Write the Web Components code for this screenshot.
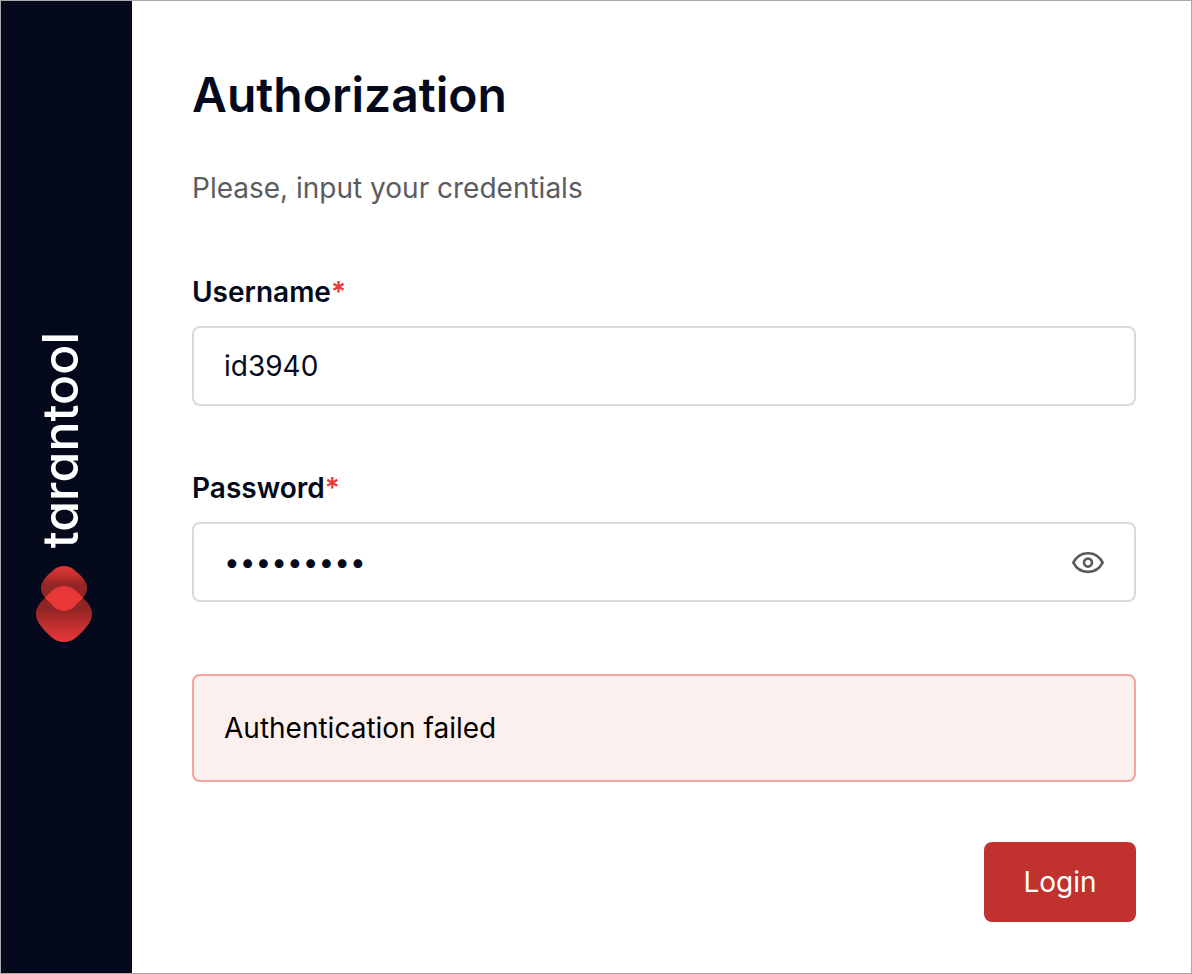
<!DOCTYPE html>
<html lang="en">
<head>
<meta charset="utf-8">
<meta name="viewport" content="width=device-width, initial-scale=1">
<title>Authorization</title>
<style>
  * { box-sizing: border-box; }
  body {
    --ink: #040a1b;
    --line: #d9d9d9;
    --accent: #e93735;
    margin: 0;
    color: var(--ink);
    background: #fff;
    font: 400 28px/40px Inter, "Liberation Sans", sans-serif;
  }
</style>
</head>
<body>
<auth-page>
  <brand-bar slot="side">tarantool</brand-bar>
  <login-form></login-form>
</auth-page>

<script>
class AuthPage extends HTMLElement {
  constructor() {
    super()
    this.attachShadow({mode: 'open'}).innerHTML = `
      <style>
        :host {
          display: flex;
          box-sizing: border-box;
          min-height: 100vh;
          border: 1px solid #a9a9a9;
        }
        main {
          flex: 1;
          min-width: 0;
          padding: 66px 55px 48px 60px;
        }
      </style>
      <slot name="side"></slot>
      <main><slot></slot></main>
    `
  }
}

class BrandBar extends HTMLElement {
  constructor() {
    super()
    this.attachShadow({mode: 'open'}).innerHTML = `
      <style>
        :host {
          display: flex;
          flex-direction: column;
          align-items: center;
          justify-content: center;
          gap: 18px;
          box-sizing: border-box;
          width: 131px;
          padding-right: 5px;
          background: var(--ink);
          color: #fff;
        }
        .name {
          writing-mode: vertical-rl;
          transform: rotate(180deg);
          margin-right: 8px;
          font-size: 50px;
          line-height: 56px;
          font-weight: 500;
          font-feature-settings: "cv11";
        }
        svg { display: block; }
      </style>
      <span class="name"><slot></slot></span>
      <svg width="56" height="76" viewBox="0 0 56 76" aria-hidden="true">
        <defs>
          <linearGradient id="top" x1="0" y1="0" x2="0" y2="1">
            <stop offset="0" stop-color="#df3534"/>
            <stop offset=".2" stop-color="#c43030"/>
            <stop offset=".42" stop-color="#962626"/>
            <stop offset="1" stop-color="#8e2424"/>
          </linearGradient>
          <linearGradient id="bottom" x1="0" y1="0" x2="0" y2="1">
            <stop offset=".38" stop-color="#8e2424"/>
            <stop offset=".6" stop-color="#b02c2c"/>
            <stop offset=".8" stop-color="#cd3232"/>
            <stop offset="1" stop-color="#e93737"/>
          </linearGradient>
          <clipPath id="upper">
            <path d="M28 0C35 0 39 4 45 10C49 14 51 18 51 22C51 28 47 32 41 38C36 43 33 45 28 45C23 45 20 43 15 38C9 32 5 28 5 22C5 18 7 14 11 10C17 4 21 0 28 0Z"/>
          </clipPath>
        </defs>
        <path fill="url(#top)" d="M28 0C35 0 39 4 45 10C49 14 51 18 51 22C51 28 47 32 41 38C36 43 33 45 28 45C23 45 20 43 15 38C9 32 5 28 5 22C5 18 7 14 11 10C17 4 21 0 28 0Z"/>
        <path fill="url(#bottom)" d="M28 20C35 20 41 25 48 33C53 38 56 42 56 48C56 54 53 58 47 65C40 72 36 76 28 76C20 76 16 72 9 65C3 58 0 54 0 48C0 42 3 38 8 33C15 25 21 20 28 20Z"/>
        <path fill="#e93737" clip-path="url(#upper)" d="M28 20C35 20 41 25 48 33C53 38 56 42 56 48C56 54 53 58 47 65C40 72 36 76 28 76C20 76 16 72 9 65C3 58 0 54 0 48C0 42 3 38 8 33C15 25 21 20 28 20Z"/>
      </svg>
    `
  }
}

class FormField extends HTMLElement {
  connectedCallback() {
    if (this.shadowRoot) return
    const type = this.getAttribute('type') || 'text'
    this.attachShadow({mode: 'open'}).innerHTML = `
      <style>
        :host { display: block; }
        label {
          display: block;
          margin-bottom: 14px;
          font-weight: 600;
        }
        .mark { color: var(--accent); }
        .box {
          display: flex;
          align-items: center;
          box-sizing: border-box;
          height: 80px;
          padding: 0 30px;
          border: 2px solid var(--line);
          border-radius: 8px;
          background: #fff;
        }
        .box:focus-within { border-color: #8c8c8c; }
        input {
          flex: 1;
          min-width: 0;
          padding: 0;
          border: 0;
          outline: 0;
          background: none;
          color: inherit;
          font: inherit;
        }
        button {
          display: block;
          padding: 0;
          border: 0;
          background: none;
          color: #5b5c60;
          cursor: pointer;
        }
        svg { display: block; }
      </style>
      <label for="control"><slot></slot><span class="mark">*</span></label>
      <div class="box">
        <input id="control" type="${type}" value="${this.getAttribute('value') || ''}" required>
        ${type === 'password' ? `
        <button type="button" aria-label="Show password">
          <svg width="32" height="32" viewBox="0 0 32 32" fill="none" stroke="currentColor" stroke-width="2.6">
            <path stroke-linejoin="round" d="M1.3 16.6C4.5 10.5 9.8 7.3 16 7.3S27.5 10.5 30.7 16.6C27.5 22.7 22.2 25.9 16 25.9S4.5 22.7 1.3 16.6Z"/>
            <circle cx="16" cy="16.6" r="4"/>
          </svg>
        </button>` : ''}
      </div>
    `
    const toggle = this.shadowRoot.querySelector('button')
    if (toggle) {
      const input = this.shadowRoot.querySelector('input')
      toggle.addEventListener('click', () => {
        input.type = input.type === 'password' ? 'text' : 'password'
      })
    }
  }
}

class AlertBox extends HTMLElement {
  constructor() {
    super()
    this.attachShadow({mode: 'open'}).innerHTML = `
      <style>
        :host {
          display: block;
          padding: 32px 30px;
          border: 2px solid #f4a3a0;
          border-radius: 8px;
          background: #fcf0ee;
          color: #000;
        }
      </style>
      <slot></slot>
    `
  }
}

class LoginForm extends HTMLElement {
  constructor() {
    super()
    this.attachShadow({mode: 'open'}).innerHTML = `
      <style>
        :host { display: block; }
        h1 {
          margin: 0 0 45px;
          font-size: 48px;
          line-height: 56px;
          font-weight: 600;
        }
        p {
          margin: 0 0 64px;
          color: #5b5c60;
        }
        form-field { margin-bottom: 62px; }
        alert-box { margin: 72px 0 60px; }
        .actions {
          display: flex;
          justify-content: flex-end;
        }
        button {
          min-width: 152px;
          padding: 20px 32px;
          border: 0;
          border-radius: 8px;
          background: #c0312f;
          color: #fff;
          font: inherit;
          cursor: pointer;
        }
        button:hover { background: #a92a28; }
      </style>
      <h1>Authorization</h1>
      <p>Please, input your credentials</p>
      <form>
        <form-field value="id3940">Username</form-field>
        <form-field type="password" value="password1">Password</form-field>
        <alert-box role="alert">Authentication failed</alert-box>
        <div class="actions"><button type="submit">Login</button></div>
      </form>
    `
    this.shadowRoot.querySelector('form').addEventListener('submit', e => e.preventDefault())
  }
}

customElements.define('auth-page', AuthPage)
customElements.define('brand-bar', BrandBar)
customElements.define('form-field', FormField)
customElements.define('alert-box', AlertBox)
customElements.define('login-form', LoginForm)
</script>
</body>
</html>
